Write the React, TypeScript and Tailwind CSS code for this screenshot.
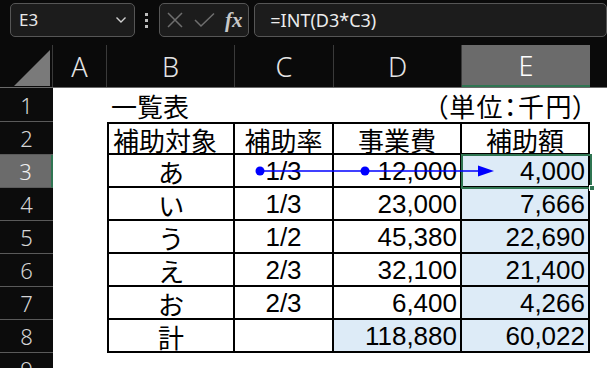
import React from "react";

const jp = "font-['Noto_Sans_CJK_JP',sans-serif]";
const num = "font-['Liberation_Sans',Arial,sans-serif]";
const ui = "font-['Noto_Sans',sans-serif]";

type C = { t?: string; f?: "jp" | "num"; a?: "l" | "c" | "r"; blue?: boolean; x?: string };

const rows: { n: number; b?: C; c?: C; d?: C; e?: C; table?: boolean; h: string }[] = [
  {
    n: 1, h: "h-[34px]",
    b: { t: "一覧表", f: "jp", a: "l" },
    e: { t: "（単位：千円）", f: "jp", a: "r", x: "tracking-[1.3px]" },
  },
  {
    n: 2, h: "h-[33px]", table: true,
    b: { t: "補助対象", f: "jp", a: "l" }, c: { t: "補助率", f: "jp", a: "c" },
    d: { t: "事業費", f: "jp", a: "c" }, e: { t: "補助額", f: "jp", a: "c" },
  },
  {
    n: 3, h: "h-[33px]", table: true,
    b: { t: "あ", f: "jp", a: "c" }, c: { t: "1/3", f: "num", a: "c" },
    d: { t: "12,000", f: "num", a: "r" }, e: { t: "4,000", f: "num", a: "r", blue: true },
  },
  {
    n: 4, h: "h-[33px]", table: true,
    b: { t: "い", f: "jp", a: "c" }, c: { t: "1/3", f: "num", a: "c" },
    d: { t: "23,000", f: "num", a: "r" }, e: { t: "7,666", f: "num", a: "r", blue: true },
  },
  {
    n: 5, h: "h-[33px]", table: true,
    b: { t: "う", f: "jp", a: "c" }, c: { t: "1/2", f: "num", a: "c" },
    d: { t: "45,380", f: "num", a: "r" }, e: { t: "22,690", f: "num", a: "r", blue: true },
  },
  {
    n: 6, h: "h-[33px]", table: true,
    b: { t: "え", f: "jp", a: "c" }, c: { t: "2/3", f: "num", a: "c" },
    d: { t: "32,100", f: "num", a: "r" }, e: { t: "21,400", f: "num", a: "r", blue: true },
  },
  {
    n: 7, h: "h-[33px]", table: true,
    b: { t: "お", f: "jp", a: "c" }, c: { t: "2/3", f: "num", a: "c" },
    d: { t: "6,400", f: "num", a: "r" }, e: { t: "4,266", f: "num", a: "r", blue: true },
  },
  {
    n: 8, h: "h-[33px]", table: true,
    b: { t: "計", f: "jp", a: "c" }, c: {},
    d: { t: "118,880", f: "num", a: "r", blue: true }, e: { t: "60,022", f: "num", a: "r", blue: true },
  },
  { n: 9, h: "h-[33px]" },
];

function Cell({ c, cls }: { c?: C; cls: string }) {
  const align =
    c?.a === "l" ? "justify-start pl-[4px]" : c?.a === "r" ? "justify-end pr-[3px]" : "justify-center";
  const font = c?.f === "jp" ? `${jp} [font-feature-settings:'palt'] pt-[2px]` : `${num} pt-[1px]`;
  return (
    <div
      className={`flex items-center min-h-0 h-full ${align} ${c?.blue ? "bg-[#ddebf7]" : "bg-white"} ${cls} ${c?.x ?? ""} text-[26px] leading-none text-black whitespace-nowrap ${font}`}
    >
      {c?.t}
    </div>
  );
}

export default function App() {
  const headers = ["A", "B", "C", "D", "E"];
  return (
    <div className="relative w-[607px] h-[368px] overflow-hidden bg-[#0a0a0a]">
      {/* formula bar */}
      <div className="flex items-start h-[45px] pt-[3px] bg-[#0a0a0a]">
        <div className="ml-[10px] w-[127px] h-[34px] border border-[#565656] rounded-[5px] bg-[#1c1c1c] flex items-center justify-between pl-[8px] pr-[7px]">
          <span className={`${ui} text-[17px] text-[#e8e8e8]`}>E3</span>
          <svg width="12" height="8" viewBox="0 0 12 8">
            <path d="M1.5 1.5 L6 6 L10.5 1.5" stroke="#d0d0d0" strokeWidth="1.4" fill="none" />
          </svg>
        </div>
        <div className="w-[25px] h-[34px] flex flex-col items-center justify-center gap-[3px]">
          <div className="w-[3px] h-[3px] bg-[#bdbdbd]" />
          <div className="w-[3px] h-[3px] bg-[#bdbdbd]" />
          <div className="w-[3px] h-[3px] bg-[#bdbdbd]" />
        </div>
        <div className="w-[92px] h-[34px] border border-[#565656] rounded-[5px] bg-[#1c1c1c] flex items-center pl-[7px] gap-[11px]">
          <svg width="16" height="16" viewBox="0 0 16 16">
            <path d="M1 1 L15 15 M15 1 L1 15" stroke="#6e6e6e" strokeWidth="1.5" fill="none" />
          </svg>
          <svg width="21" height="16" viewBox="0 0 21 16">
            <path d="M1 8 L7 14 L20 1.5" stroke="#6e6e6e" strokeWidth="1.5" fill="none" />
          </svg>
          <span className="font-['Liberation_Serif',serif] italic font-bold text-[21px] leading-none text-[#c8c8c8] ml-[-1px]">
            fx
          </span>
        </div>
        <div className="ml-[5px] w-[360px] h-[34px] border border-[#565656] rounded-[5px] bg-[#1c1c1c] flex items-center pl-[15px]">
          <span className={`${ui} text-[18px] text-[#ececec]`}>=INT(D3*C3)</span>
        </div>
      </div>

      {/* column headers */}
      <div className="grid grid-cols-[53px_54px_128px_99px_128px_128px_17px] h-[43px] bg-[#0a0a0a] border-b border-[#6a6a6a]">
        <div className="relative border-r border-[#3a3a3a]">
          <svg className="absolute left-0 top-0" width="53" height="43" viewBox="0 0 53 43">
            <polygon points="14,41 50,41 50,5" fill="#7a7a7a" />
          </svg>
        </div>
        {headers.map((h) => (
          <div
            key={h}
            className={`flex items-center justify-center ${ui} font-light text-[27px] leading-none ${
              h === "E"
                ? "bg-[#6b6b6b] text-white border-b-2 border-[#2f7552]"
                : "text-[#e4e4e4] border-r border-[#3a3a3a]"
            }`}
          >
            {h}
          </div>
        ))}
        <div />
      </div>

      {/* body */}
      {rows.map((r) => {
        const t = r.table;
        const top = r.n === 2 ? "border-t-2" : "";
        const base = t ? `border-black border-b-2 border-r-2 ${top}` : "";
        return (
          <div
            key={r.n}
            className={`grid grid-cols-[53px_54px_128px_99px_128px_128px_17px] grid-rows-[100%] ${r.h}`}
          >
            <div
              className={`flex items-center justify-center ${ui} font-light text-[22px] leading-none border-b border-[#5a5a5a] ${
                r.n === 3
                  ? "bg-[#6b6b6b] text-[#f0f0f0] border-r-2 border-r-[#2f7552]"
                  : "bg-[#0c0c0c] text-[#d6d6d6]"
              }`}
            >
              {r.n}
            </div>
            <div className="bg-white" />
            <Cell c={r.b} cls={`${base} ${t ? "border-l-2" : ""}`} />
            <Cell c={r.c} cls={base} />
            <Cell c={r.d} cls={base} />
            <Cell c={r.e} cls={base} />
            <div className="bg-white" />
          </div>
        );
      })}

      {/* selection */}
      <div className="absolute left-[461px] top-[154px] w-[131px] h-[35px] border-2 border-[#2f7552] pointer-events-none" />
      <div className="absolute left-[589px] top-[185px] w-[6px] h-[6px] bg-[#2f7552] border border-white pointer-events-none" />

      {/* precedent arrow */}
      <svg className="absolute left-0 top-0 pointer-events-none" width="607" height="368" viewBox="0 0 607 368">
        <line x1="260" y1="171" x2="482" y2="171" stroke="#0000ff" strokeWidth="1.6" />
        <circle cx="260" cy="171" r="4.5" fill="#0000ff" />
        <circle cx="365" cy="171" r="4.5" fill="#0000ff" />
        <polygon points="478,165.5 494,171 478,176.5" fill="#0000ff" />
      </svg>
    </div>
  );
}
